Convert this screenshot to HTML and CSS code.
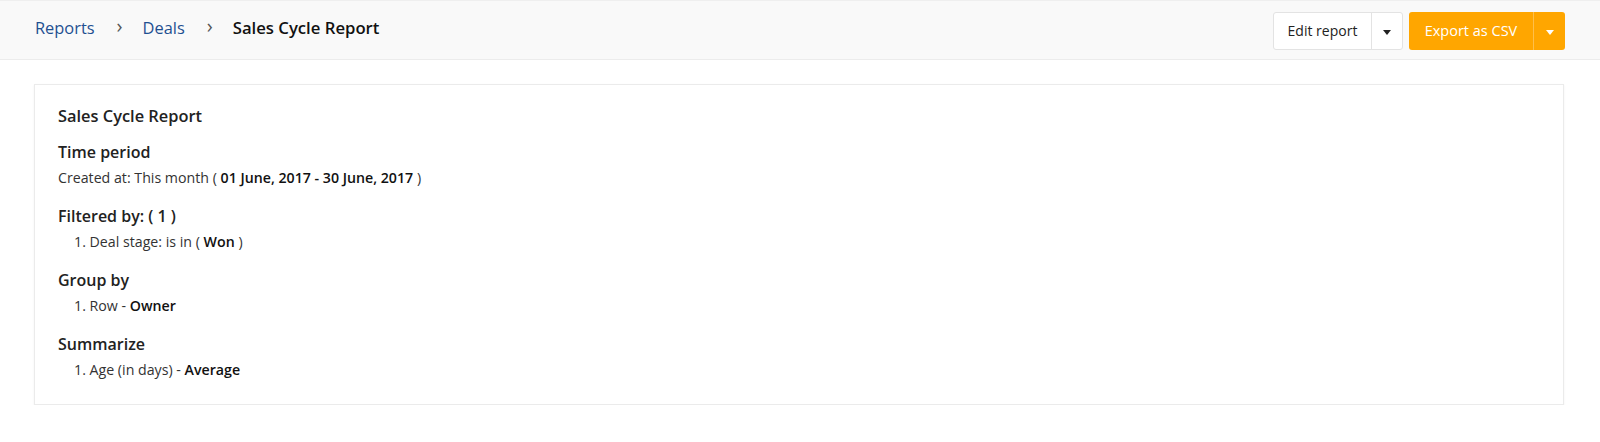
FILE: index.html
```html
<!DOCTYPE html>
<html lang="en">
<head>
    <meta charset="UTF-8">
    <meta name="viewport" content="width=device-width, initial-scale=1.0">
    <title>Sales Cycle Report</title>
    <link rel="stylesheet" href="styles.css">
</head>
<body>

    <!-- Top bar with breadcrumb and actions -->
    <div class="topbar">
        <div class="breadcrumb">
            <a href="#">Reports</a>
            <span class="sep">&rsaquo;</span>
            <a href="#">Deals</a>
            <span class="sep">&rsaquo;</span>
            <span class="current">Sales Cycle Report</span>
        </div>
        <div class="actions">
            <div class="btn-group btn-white">
                <button class="btn-main">Edit report</button>
                <button class="btn-caret"><span class="caret"></span></button>
            </div>
            <div class="btn-group btn-orange">
                <button class="btn-main">Export as CSV</button>
                <button class="btn-caret"><span class="caret"></span></button>
            </div>
        </div>
    </div>

    <!-- Report summary card -->
    <div class="card">
        <div class="card-title">Sales Cycle Report</div>

        <div class="section">
            <div class="section-title">Time period</div>
            <div class="plain-line">Created at: This month ( <b>01 June, 2017 - 30 June, 2017</b> )</div>
        </div>

        <div class="section">
            <div class="section-title">Filtered by: ( 1 )</div>
            <ol class="items">
                <li>Deal stage: is in ( <b>Won</b> )</li>
            </ol>
        </div>

        <div class="section">
            <div class="section-title">Group by</div>
            <ol class="items">
                <li>Row - <b>Owner</b></li>
            </ol>
        </div>

        <div class="section">
            <div class="section-title">Summarize</div>
            <ol class="items">
                <li>Age (in days) - <b>Average</b></li>
            </ol>
        </div>
    </div>

</body>
</html>
```

FILE: styles.css
```css
body {
    margin: 0;
    font-family: "Open Sans", "Lato", sans-serif;
    color: #222;
    background: #fff;
}

/* Top bar */
.topbar {
    height: 58px;
    display: flex;
    align-items: center;
    justify-content: space-between;
    padding: 0 35px;
    background: #f9f9f9;
    border-top: 1px solid #efefef;
    border-bottom: 1px solid #ececec;
}

.breadcrumb {
    display: flex;
    align-items: center;
    font-size: 16.4px;
    margin-top: -6px;
}

.breadcrumb a {
    color: #1f5091;
    text-decoration: none;
}

.breadcrumb .sep {
    color: #555;
    font-size: 20px;
    margin: 0 20px 3px 22px;
}

.breadcrumb .current {
    font-weight: 600;
    font-size: 16.7px;
    color: #111;
}

/* Buttons */
.actions {
    display: flex;
    gap: 6px;
    margin-top: 1px;
}

.btn-group {
    display: flex;
    height: 38px;
    border-radius: 3px;
    overflow: hidden;
}

.btn-group button {
    border: 0;
    background: transparent;
    font-family: "Open Sans", "Lato", sans-serif;
    font-size: 14px;
    cursor: pointer;
    padding: 0;
}

.btn-white {
    background: #fff;
    border: 1px solid #e3e3e3;
    height: 36px;
}

.btn-white .btn-main {
    width: 97px;
    color: #222;
}

.btn-white .btn-caret {
    width: 31px;
    border-left: 1px solid #e3e3e3;
}

.btn-orange {
    background: #ffa600;
}

.btn-orange .btn-main {
    width: 124px;
    color: #fff;
    font-size: 14.5px;
}

.btn-orange .btn-caret {
    width: 32px;
    border-left: 1px solid #ffbf4a;
}

.caret {
    display: inline-block;
    border-left: 4px solid transparent;
    border-right: 4px solid transparent;
    border-top: 5px solid #222;
    vertical-align: middle;
}

.btn-orange .caret {
    border-top-color: #fff;
}

/* Report card */
.card {
    margin: 24px 36px 0 34px;
    padding: 21px 23px 24px;
    border: 1px solid #ebebeb;
    box-shadow: 0 1px 2px rgba(0, 0, 0, 0.06);
    line-height: 20px;
}

.card-title {
    font-size: 16.4px;
    font-weight: 600;
    margin-bottom: -2px;
}

.section {
    margin-top: 18px;
}

.section-title {
    font-size: 16px;
    font-weight: 600;
}

.plain-line {
    font-size: 14.2px;
    margin-top: 6px;
    color: #333;
}

.items {
    margin: 6px 0 0;
    padding: 0 0 0 16px;
    list-style: none;
    counter-reset: item;
    font-size: 14.2px;
    color: #333;
}

.items li {
    counter-increment: item;
}

.items li::before {
    content: counter(item) ". ";
}

.items b,
.plain-line b {
    font-weight: 600;
    color: #111;
}
```
